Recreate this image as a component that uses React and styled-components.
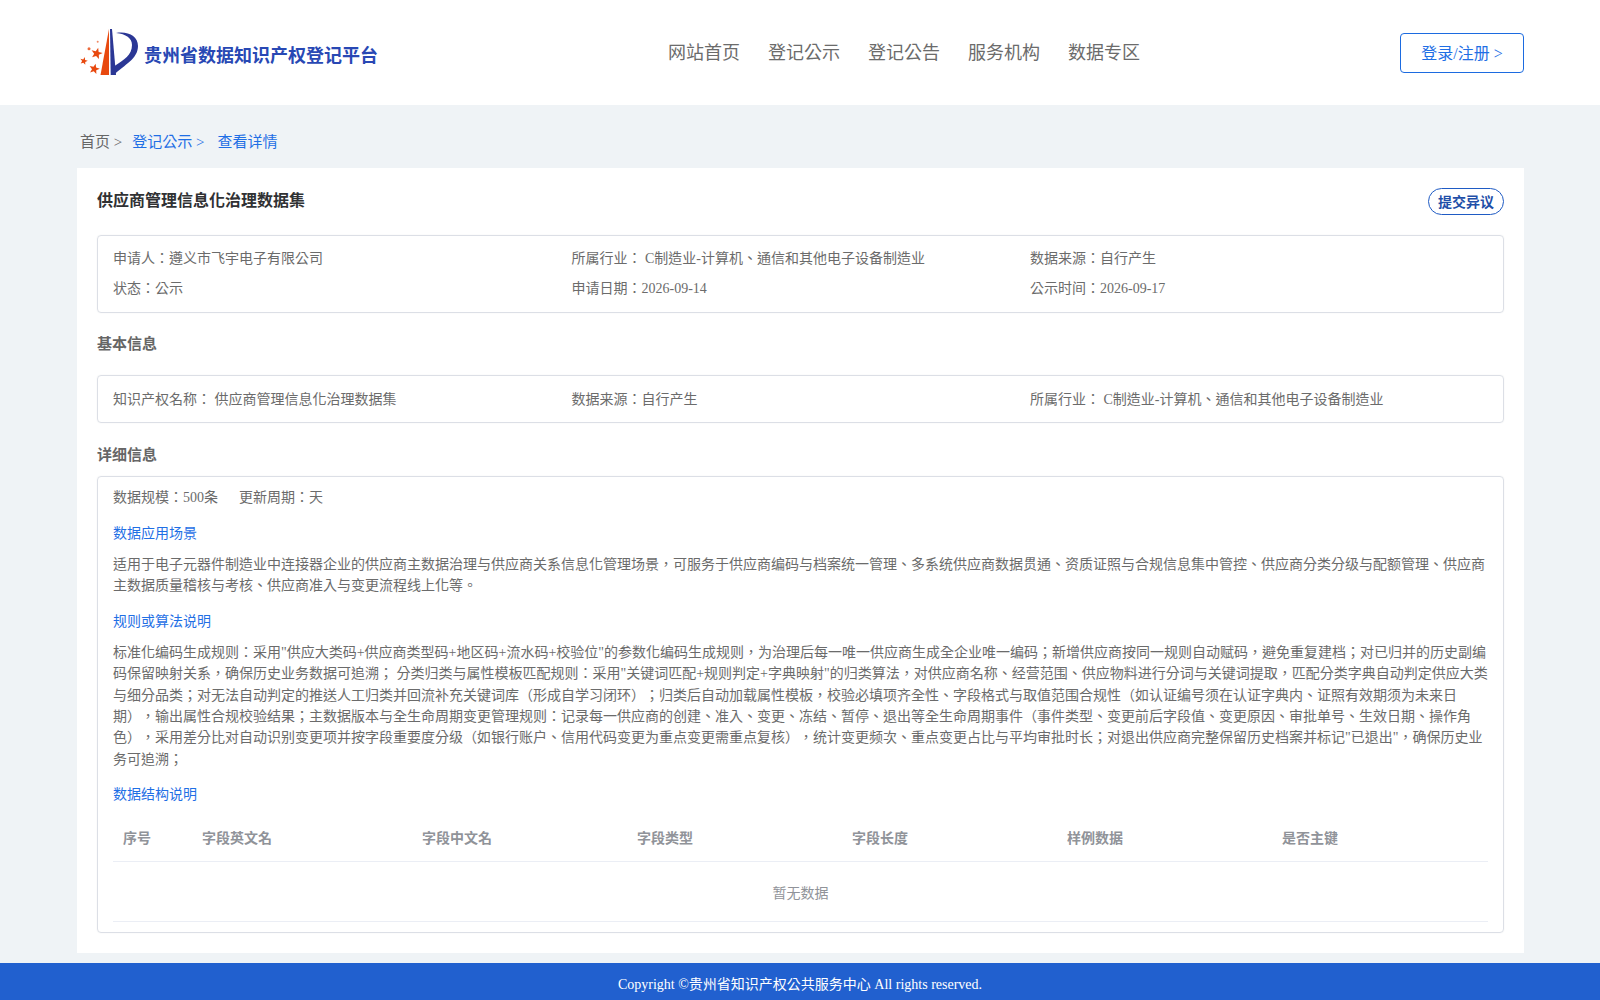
import React from "react";
import styled, { createGlobalStyle } from "styled-components";

const fontStack = `"Liberation Serif", "Noto Sans CJK TC", serif`;

const GlobalStyle = createGlobalStyle`
  html, body {
    margin: 0;
    padding: 0;
    background: #eff3f6;
    font-family: ${fontStack};
    text-spacing-trim: space-all;
  }
  * { box-sizing: border-box; }
`;

const Page = styled.div`
  width: 1600px;
  height: 1000px;
  overflow: hidden;
  display: flex;
  flex-direction: column;
`;

const Header = styled.header`
  height: 105px;
  flex: none;
  background: #fff;
  padding: 0 76px 0 80px;
  display: grid;
  grid-template-columns: 588px auto 1fr;
  align-items: center;
`;

const Brand = styled.div`
  display: flex;
  align-items: center;
  gap: 6px;
`;

const BrandName = styled.span`
  font-size: 18px;
  font-weight: 700;
  color: #2848b4;
  padding-top: 3px;
`;

const Nav = styled.nav`
  display: flex;
  gap: 28px;
`;

const NavItem = styled.a`
  font-size: 18px;
  color: #6b6b6b;
  padding-bottom: 4px;
`;

const LoginButton = styled.a`
  justify-self: end;
  width: 124px;
  height: 40px;
  border: 1px solid #1c6be0;
  border-radius: 4px;
  color: #1f6fe5;
  font-size: 16px;
  padding-bottom: 2px;
  display: flex;
  align-items: center;
  justify-content: center;
`;

const Main = styled.main`
  flex: 1;
  padding: 0 76px 0 77px;
  display: flex;
  flex-direction: column;
`;

const Crumbs = styled.div`
  height: 63px;
  padding: 7px 3px 0;
  display: flex;
  align-items: center;
  font-size: 15px;
`;

const Crumb = styled.span`
  color: ${(p) => (p.$active ? "#1f6fe5" : "#666")};
  margin-right: ${(p) => p.$gap || 0}px;
  white-space: pre;
`;

const Card = styled.section`
  background: #fff;
  height: 785px;
  padding: 20px;
`;

const TitleRow = styled.div`
  display: flex;
  align-items: flex-start;
  justify-content: space-between;
  height: 47px;
`;

const Title = styled.h1`
  margin: 0;
  padding-top: 1px;
  font-size: 16px;
  line-height: 24px;
  font-weight: 700;
  color: #303133;
`;

const ObjectionButton = styled.button`
  width: 76px;
  height: 27px;
  padding: 0 0 2px;
  background: #fff;
  border: 1px solid #1f5bc4;
  border-radius: 14px;
  color: #1f4fa8;
  font-family: inherit;
  font-size: 14px;
  font-weight: 700;
`;

const Panel = styled.div`
  border: 1px solid #dcdfe6;
  border-radius: 4px;
  box-shadow: 0 0 2px rgba(0, 0, 0, 0.06);
  padding: ${(p) => p.$padding};
  font-size: 14px;
  color: #6b6b6b;
`;

const InfoGrid = styled.div`
  display: grid;
  grid-template-columns: repeat(3, 458.5px);
  row-gap: 8px;
`;

const InfoCell = styled.div`
  line-height: 22px;
  white-space: pre;
`;

const SectionHeading = styled.h2`
  margin: 0;
  height: ${(p) => p.$height}px;
  padding-top: ${(p) => p.$top}px;
  font-size: 15px;
  line-height: 22px;
  font-weight: 700;
  color: #666;
`;

const MetaRow = styled.div`
  display: flex;
  gap: 21px;
  line-height: 22px;
  margin-bottom: 1px;
`;

const SubTitle = styled.div`
  color: #1f6fe5;
  line-height: 22px;
  margin-top: 14px;
`;

const Paragraph = styled.p`
  margin: 9px 0 0;
  line-height: 21.4px;
`;

const FieldTable = styled.div`
  margin-top: 6px;
`;

const TableHead = styled.div`
  display: grid;
  grid-template-columns: 79px 220px repeat(5, 215px);
  height: 50px;
  align-items: center;
  border-bottom: 1px solid #ebeef5;
`;

const HeadCell = styled.div`
  padding-left: 10px;
  font-weight: 700;
  color: #909399;
`;

const EmptyRow = styled.div`
  height: 60px;
  display: flex;
  align-items: center;
  justify-content: center;
  color: #909399;
  border-bottom: 1px solid #ebeef5;
`;

const Footer = styled.footer`
  height: 37px;
  flex: none;
  background: #2160cf;
  color: #fff;
  font-size: 14px;
  display: flex;
  align-items: center;
  justify-content: center;
  padding-top: 3px;
`;

const starPoints = (cx, cy, r) => {
  const pts = [];
  for (let i = 0; i < 10; i++) {
    const rad = i % 2 ? r * 0.42 : r;
    const a = -Math.PI / 2 + 0.25 + (i * Math.PI) / 5;
    pts.push(`${(cx + rad * Math.cos(a)).toFixed(2)},${(cy + rad * Math.sin(a)).toFixed(2)}`);
  }
  return pts.join(" ");
};

const Logo = () => (
  <svg width="58" height="50" viewBox="0 0 58 50">
    <path d="M29 1 L29 47 L20.500 47 Z" fill="#e8490f" />
    <path d="M30 1 L30.700 47 L36 47 L32 1 Z" fill="#2b3795" />
    <path
      d="M36 5 C48 3 58 8 58 18 C58 31 44 37 35 46 L34.500 38 C44 32 52 27 52 17 C52 10 46 6 36 5 Z"
      fill="#2b3795"
    />
    <polygon fill="#e8490f" points={starPoints(16.7, 25.5, 6)} />
    <polygon fill="#e8490f" points={starPoints(14.3, 41, 5.5)} />
    <polygon fill="#e8490f" points={starPoints(3.8, 33, 4)} />
    <circle cx="9" cy="20.700" r="1.500" fill="#ec6a3c" />
    <circle cx="17.700" cy="13.700" r="1" fill="#ef8a66" />
  </svg>
);

const navItems = ["网站首页", "登记公示", "登记公告", "服务机构", "数据专区"];
const columns = ["序号", "字段英文名", "字段中文名", "字段类型", "字段长度", "样例数据", "是否主键"];

const App = () => (
  <Page>
    <GlobalStyle />
    <Header>
      <Brand>
        <Logo />
        <BrandName>贵州省数据知识产权登记平台</BrandName>
      </Brand>
      <Nav>
        {navItems.map((item) => (
          <NavItem key={item}>{item}</NavItem>
        ))}
      </Nav>
      <LoginButton>登录/注册 &gt;</LoginButton>
    </Header>
    <Main>
      <Crumbs>
        <Crumb $gap={10}>首页 &gt;</Crumb>
        <Crumb $active $gap={13}>登记公示 &gt;</Crumb>
        <Crumb $active>查看详情</Crumb>
      </Crumbs>
      <Card>
        <TitleRow>
          <Title>供应商管理信息化治理数据集</Title>
          <ObjectionButton>提交异议</ObjectionButton>
        </TitleRow>
        <Panel $padding="12px 15px">
          <InfoGrid>
            <InfoCell>申请人：遵义市飞宇电子有限公司</InfoCell>
            <InfoCell>所属行业： C制造业-计算机、通信和其他电子设备制造业</InfoCell>
            <InfoCell>数据来源：自行产生</InfoCell>
            <InfoCell>状态：公示</InfoCell>
            <InfoCell>申请日期：2026-09-14</InfoCell>
            <InfoCell>公示时间：2026-09-17</InfoCell>
          </InfoGrid>
        </Panel>
        <SectionHeading $height={62} $top={20}>基本信息</SectionHeading>
        <Panel $padding="13px 15px 11px">
          <InfoGrid>
            <InfoCell>知识产权名称： 供应商管理信息化治理数据集</InfoCell>
            <InfoCell>数据来源：自行产生</InfoCell>
            <InfoCell>所属行业： C制造业-计算机、通信和其他电子设备制造业</InfoCell>
          </InfoGrid>
        </Panel>
        <SectionHeading $height={53} $top={21}>详细信息</SectionHeading>
        <Panel $padding="10px 15px 10px">
          <MetaRow>
            <span>数据规模：500条</span>
            <span>更新周期：天</span>
          </MetaRow>
          <SubTitle>数据应用场景</SubTitle>
          <Paragraph>
            适用于电子元器件制造业中连接器企业的供应商主数据治理与供应商关系信息化管理场景，可服务于供应商编码与档案统一管理、多系统供应商数据贯通、资质证照与合规信息集中管控、供应商分类分级与配额管理、供应商主数据质量稽核与考核、供应商准入与变更流程线上化等。
          </Paragraph>
          <SubTitle>规则或算法说明</SubTitle>
          <Paragraph>
            标准化编码生成规则：采用"供应大类码+供应商类型码+地区码+流水码+校验位"的参数化编码生成规则，为治理后每一唯一供应商生成全企业唯一编码；新增供应商按同一规则自动赋码，避免重复建档；对已归并的历史副编码保留映射关系，确保历史业务数据可追溯； 分类归类与属性模板匹配规则：采用"关键词匹配+规则判定+字典映射"的归类算法，对供应商名称、经营范围、供应物料进行分词与关键词提取，匹配分类字典自动判定供应大类与细分品类；对无法自动判定的推送人工归类并回流补充关键词库（形成自学习闭环）；归类后自动加载属性模板，校验必填项齐全性、字段格式与取值范围合规性（如认证编号须在认证字典内、证照有效期须为未来日期），输出属性合规校验结果；主数据版本与全生命周期变更管理规则：记录每一供应商的创建、准入、变更、冻结、暂停、退出等全生命周期事件（事件类型、变更前后字段值、变更原因、审批单号、生效日期、操作角色），采用差分比对自动识别变更项并按字段重要度分级（如银行账户、信用代码变更为重点变更需重点复核），统计变更频次、重点变更占比与平均审批时长；对退出供应商完整保留历史档案并标记"已退出"，确保历史业务可追溯；
          </Paragraph>
          <SubTitle>数据结构说明</SubTitle>
          <FieldTable>
            <TableHead>
              {columns.map((col) => (
                <HeadCell key={col}>{col}</HeadCell>
              ))}
            </TableHead>
            <EmptyRow>暂无数据</EmptyRow>
          </FieldTable>
        </Panel>
      </Card>
    </Main>
    <Footer>Copyright ©贵州省知识产权公共服务中心 All rights reserved.</Footer>
  </Page>
);

export default App;
